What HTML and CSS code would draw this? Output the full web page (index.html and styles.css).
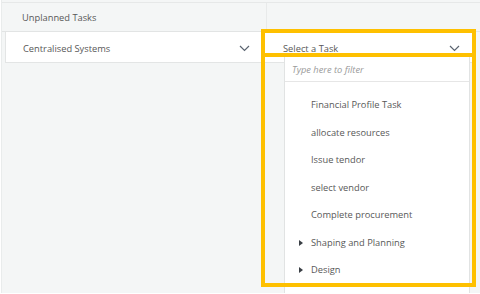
FILE: index.html
```html
<!DOCTYPE html>
<html>
<head>
<meta charset="utf-8">
<link rel="stylesheet" href="styles.css">
</head>
<body>
<div class="page">
  <div class="header">
    <span class="header-label">Unplanned Tasks</span>
    <span class="header-divider"></span>
  </div>
  <div class="row">
    <div class="cell cell-left">
      <span class="cell-text">Centralised Systems</span>
      <svg class="chev" width="11" height="7" viewBox="0 0 11 7"><polyline points="1,1 5.5,5.5 10,1" fill="none" stroke="#5a6470" stroke-width="1.2"/></svg>
    </div>
    <div class="cell cell-right">
      <span class="cell-text">Select a Task</span>
      <svg class="chev" width="11" height="7" viewBox="0 0 11 7"><polyline points="1,1 5.5,5.5 10,1" fill="none" stroke="#5a6470" stroke-width="1.2"/></svg>
    </div>
  </div>

  <div class="dropdown">
    <div class="filter">Type here to filter</div>
    <ul class="list">
      <li class="item">Financial Profile Task</li>
      <li class="item">allocate resources</li>
      <li class="item">Issue tendor</li>
      <li class="item">select vendor</li>
      <li class="item">Complete procurement</li>
      <li class="item"><span class="caret"></span>Shaping and Planning</li>
      <li class="item"><span class="caret"></span>Design</li>
      <li class="item"><span class="caret"></span>Service Supply</li>
    </ul>
  </div>

  <div class="hl hl-select"></div>
  <div class="hl hl-panel"></div>
</div>
</body>
</html>
```
FILE: styles.css
```css
* { box-sizing: border-box; }
html, body { margin: 0; padding: 0; background: #ffffff; }
body {
  font-family: "Open Sans", "Noto Sans", sans-serif;
  font-size: 9.3px;
  color: #585858;
}
.page {
  position: relative;
  width: 479px;
  height: 293px;
  margin-left: 1px;
  background: #f4f6f6;
  border-left: 1px solid #e9ecec;
  overflow: hidden;
}
.header {
  position: relative;
  height: 30px;
  margin-top: 2px;
  border-top: 1px solid #e6e8e8;
  border-bottom: 1px solid #e2e4e4;
  display: flex;
  align-items: center;
  padding-left: 20px;
}
.header-divider {
  position: absolute;
  left: 264px;
  top: 0;
  height: 28px;
  border-left: 1px solid #e8eaea;
}
.row {
  display: flex;
  height: 31px;
  margin-left: 3px;
  width: 468px;
  background: #ffffff;
  border: 1px solid #e3e5e5;
  border-top: none;
}
.cell {
  display: flex;
  align-items: center;
  justify-content: space-between;
}
.cell-left {
  width: 255px;
  padding-left: 17px;
  padding-right: 11px;
  padding-top: 2px;
}
.cell-right {
  flex: 1;
  padding-left: 22px;
  padding-right: 12px;
  padding-top: 3px;
}
.chev { display: block; }
.dropdown {
  position: absolute;
  left: 282px;
  top: 57px;
  width: 186px;
  height: 260px;
  background: #ffffff;
  border-left: 1px solid #e1e3e3;
  border-right: 1px solid #e1e3e3;
}
.filter {
  height: 25px;
  display: flex;
  align-items: center;
  padding-left: 7px;
  font-style: italic;
  color: #9a9a9a;
  border-bottom: 1px solid #e6e6e6;
}
.list {
  list-style: none;
  margin: 0;
  padding: 9px 0 0 0;
}
.item {
  position: relative;
  height: 27.5px;
  display: flex;
  align-items: center;
  padding-left: 26px;
}
.caret {
  position: absolute;
  left: 14px;
  top: 11px;
  width: 0;
  height: 0;
  border-top: 3px solid transparent;
  border-bottom: 3px solid transparent;
  border-left: 4px solid #3a3f45;
}
.hl {
  position: absolute;
  border: 4px solid #fec000;
}
.hl-select {
  left: 259px;
  top: 29px;
  width: 215px;
  height: 28px;
}
.hl-panel {
  left: 259px;
  top: 53px;
  width: 215px;
  height: 234px;
}
```
